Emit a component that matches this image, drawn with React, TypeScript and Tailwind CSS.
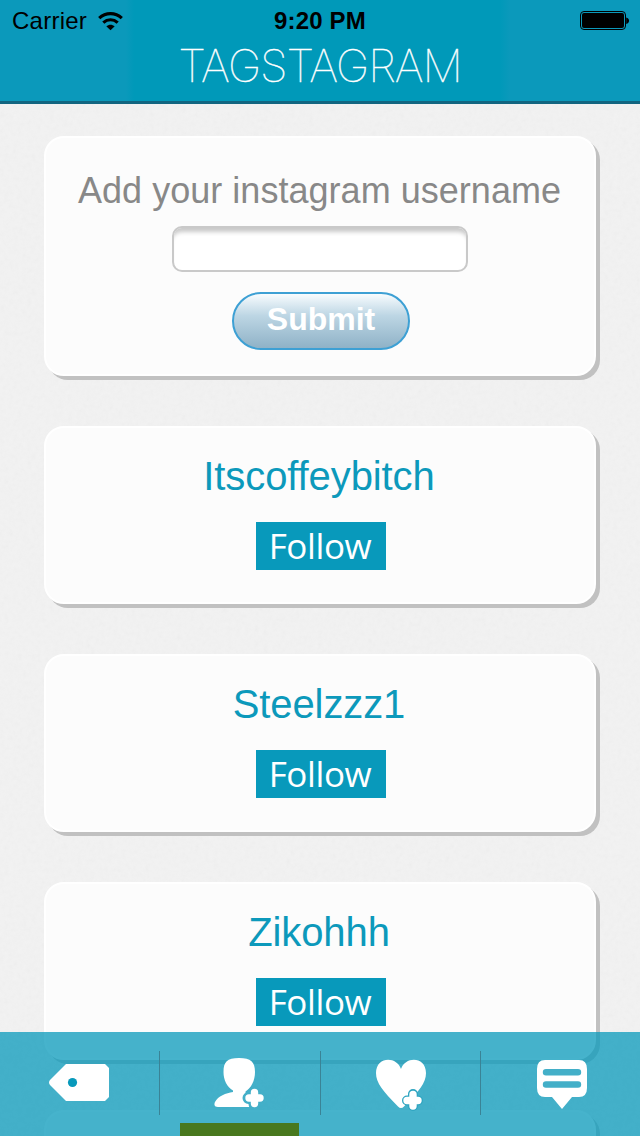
import type { ReactNode } from 'react';

interface CardProps {
  className?: string;
  children?: ReactNode;
}

const users = ['Itscoffeybitch', 'Steelzzz1', 'Zikohhh'];

const Card = ({ className = '', children }: CardProps) => (
  <section
    className={`flex w-[552px] shrink-0 flex-col items-center rounded-[20px] border-2 border-white bg-[#fcfcfc] shadow-[4px_4px_0_#c1c1c1] ${className}`}
  >
    {children}
  </section>
);

const StatusBar = () => (
  <div className="grid h-[42px] grid-cols-3 items-center text-2xl leading-none text-black">
    <div className="flex items-center gap-[11px] pl-[12px]">
      <span className="tracking-[0.25px]">Carrier</span>
      <svg width="25" height="19" viewBox="0 0 25 19" fill="none" stroke="black" strokeWidth="3.2">
        <path d="M1.2 6.1C7.7.2 17.3.2 23.8 6.1" />
        <path d="M5.3 10.6C9.6 6.8 15.4 6.8 19.7 10.6" />
        <path d="M8.3 14.2C10.9 12.1 14.1 12.1 16.7 14.2L12.5 18.3Z" fill="black" stroke="none" />
      </svg>
    </div>
    <span className="text-center font-bold tracking-[0.15px] whitespace-nowrap">9:20 PM</span>
    <div className="flex justify-end pr-[10px]">
      <svg width="50" height="20" viewBox="0 0 50 20">
        <rect x="0.5" y="0.5" width="45" height="18" rx="3.5" fill="none" stroke="black" />
        <rect x="2" y="2" width="42" height="15" rx="2" fill="black" />
        <path d="M46.2 6.5C50 7.2 50 12.3 46.2 13Z" fill="black" />
      </svg>
    </div>
  </div>
);

const Header = () => (
  <header className="relative h-[104px] shrink-0 border-b-[3px] border-[#126580] bg-[linear-gradient(90deg,#0b99bb_126px,#0099b9_134px,#0099b9_500px,#0b99bb_510px)]">
    <StatusBar />
    <h1 className="text-center font-['Inter',sans-serif] text-[45px] leading-[48px] font-thin tracking-[-1.1px] text-white [-webkit-text-stroke:0.4px_white]">
      TAGSTAGRAM
    </h1>
  </header>
);

const TagIcon = () => (
  <svg width="60" height="37" viewBox="0 0 60 37">
    <path d="M17 0H56L60 4V33L56 37H17L1 21Q-1 18.5 1 16Z" fill="white" />
    <circle cx="23.5" cy="18.5" r="4.6" fill="#0899bb" />
  </svg>
);

const AddUserIcon = () => (
  <svg width="51" height="50" viewBox="0 0 51 50" fill="white" strokeLinecap="round">
    <path d="M25 0C37 0 41 4 41 14C41 23 37 30 31.5 33.5V35C35 36 39 38 42 41L35 49H4C0 49 0 46 1 44C4 38 12 35 19 34V32.5C13 29 9.5 22 9.5 14C9.5 4 13 0 25 0Z" />
    <path d="M40.5 34V46M34.5 40H46.5" stroke="#43afc8" strokeWidth="12" />
    <path d="M40.5 34.5V45.5M35 40H46" stroke="white" strokeWidth="7.4" />
  </svg>
);

const AddHeartIcon = () => (
  <svg width="50" height="52" viewBox="0 0 50 52" fill="white" strokeLinecap="round">
    <path d="M25 10C29-3 50-3 50 14C50 24 43 32 28 47.5Q25 50.5 22 47.5C7 32 0 24 0 14C0-3 21-3 25 10Z" />
    <path d="M37 35V47M31 41.5H42" stroke="#2fa5c1" strokeWidth="10" />
    <path d="M37 35.5V47M31 41.5H42" stroke="white" strokeWidth="7.4" />
  </svg>
);

const CommentIcon = () => (
  <svg width="50" height="50" viewBox="0 0 50 50">
    <path d="M8 0H42Q50 0 50 9V28Q50 37 42 37H35L25 49L15 37H8Q0 37 0 28V9Q0 0 8 0Z" fill="white" />
    <path d="M9 12.3H41M9 24.5H41" stroke="#43afc8" strokeWidth="6.4" strokeLinecap="round" />
  </svg>
);

const TabBar = () => (
  <nav className="absolute inset-x-0 bottom-0 h-[104px] bg-[#0899bb]/75">
    <div className="grid h-full grid-cols-[160px_161px_160px_1fr] pt-[19px] pb-[21px]">
      <button aria-label="Tags" className="flex items-start justify-center border-r border-[#3a8396] pt-[13px] pr-px">
        <TagIcon />
      </button>
      <button aria-label="Followers" className="flex items-start justify-center border-r border-[#3a8396] pt-[7px] pr-px">
        <AddUserIcon />
      </button>
      <button aria-label="Likes" className="flex items-start justify-center border-r border-[#3a8396] pt-2">
        <AddHeartIcon />
      </button>
      <button aria-label="Comments" className="flex items-start justify-center pt-[9px] pl-[3px]">
        <CommentIcon />
      </button>
    </div>
    <div className="absolute bottom-0 left-[180px] h-[13px] w-[119px] bg-[#48781e]" />
  </nav>
);

// faint paper grain behind the cards
const PaperTexture = () => (
  <svg className="absolute inset-0 h-full w-full opacity-[0.05]">
    <filter id="grain">
      <feTurbulence type="fractalNoise" baseFrequency="0.22" numOctaves="3" />
      <feColorMatrix type="saturate" values="0" />
    </filter>
    <rect width="100%" height="100%" filter="url(#grain)" />
  </svg>
);

const App = () => {
  return (
    <div className="relative flex h-[1136px] w-[640px] flex-col overflow-hidden bg-[#f2f2f2] font-['Liberation_Sans',Arial,sans-serif]">
      <PaperTexture />
      <Header />

      <main className="relative flex min-h-0 flex-1 flex-col items-center gap-[50px] overflow-hidden pt-8">
        <Card className="h-60">
          <label htmlFor="username" className="mt-8 pr-px text-4xl leading-[42px] tracking-[0.03px] text-[#888]">
            Add your instagram username
          </label>
          <input
            id="username"
            className="mt-[14px] h-[46px] w-[296px] rounded-[10px] border-2 border-[#c9c9c9] bg-white px-2 shadow-[inset_0_7px_4px_-3px_#c9c9c9] outline-none"
          />
          <button className="mt-5 ml-[2px] h-[58px] w-[178px] rounded-full border-2 border-[#3da0d4] bg-linear-to-b from-[#f8fcfe] via-[#bdd6e4] via-40% to-[#8fb2c7] pb-1 text-[32px] leading-none font-bold text-white">
            Submit
          </button>
        </Card>

        {users.map((user) => (
          <Card key={user} className="h-[178px]">
            <h2 className="mt-[25px] pr-[2px] text-[40px] leading-[46px] tracking-[-0.1px] text-[#0c99bb]">{user}</h2>
            <button className="mt-[23px] ml-[2px] h-12 w-[130px] bg-[#0899bb] pr-[2px] font-['Open_Sans',sans-serif] text-[35px] leading-[48px] tracking-[-0.4px] text-white">
              Follow
            </button>
          </Card>
        ))}
        <Card className="h-[178px]" />
      </main>

      <TabBar />
    </div>
  );
};

export default App;
